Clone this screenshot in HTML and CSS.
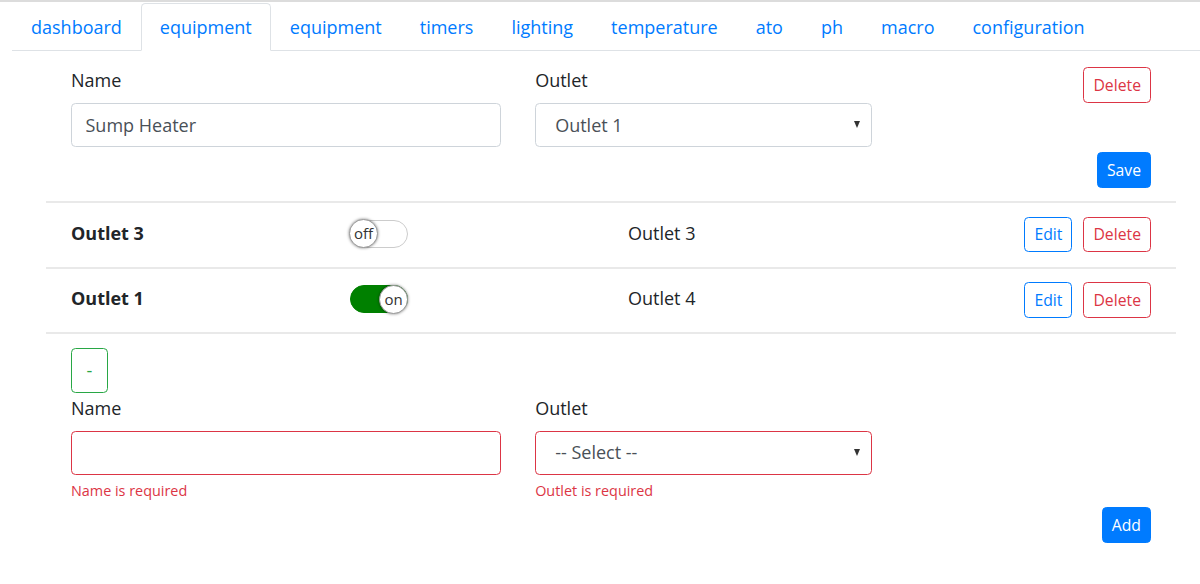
FILE: index.html
```html
<!DOCTYPE html>
<html lang="en">

<head>
  <meta charset="UTF-8" />
  <meta name="viewport" content="width=device-width, initial-scale=1.0" />
  <title>equipment</title>
  <link rel="stylesheet" href="styles.css">
</head>

<body>
  <ul class="tabs">
    <li><a class="tab" href="#">dashboard</a></li>
    <li><a class="tab active" href="#">equipment</a></li>
    <li><a class="tab" href="#">equipment</a></li>
    <li><a class="tab" href="#">timers</a></li>
    <li><a class="tab" href="#">lighting</a></li>
    <li><a class="tab" href="#">temperature</a></li>
    <li><a class="tab" href="#">ato</a></li>
    <li><a class="tab" href="#">ph</a></li>
    <li><a class="tab" href="#">macro</a></li>
    <li><a class="tab" href="#">configuration</a></li>
  </ul>

  <div class="content">
    <form class="edit-form">
      <div class="row">
        <div class="col col-5">
          <label for="name">Name</label>
          <input id="name" class="field" type="text" value="Sump Heater">
        </div>
        <div class="col col-4">
          <label for="outlet">Outlet</label>
          <div class="select">
            <select id="outlet" class="field">
              <option>Outlet 1</option>
            </select>
          </div>
        </div>
        <div class="col col-3 right">
          <button type="button" class="btn btn-sm btn-outline-danger">Delete</button>
        </div>
      </div>
      <div class="actions">
        <button type="submit" class="btn btn-sm btn-primary">Save</button>
      </div>
    </form>

    <ul class="list">
      <li class="row item">
        <div class="col col-3 cell item-name">Outlet 3</div>
        <div class="col col-3 cell">
          <span class="toggle"><span class="knob">off</span></span>
        </div>
        <div class="col col-3 cell">Outlet 3</div>
        <div class="col col-3 right buttons">
          <button type="button" class="btn btn-sm btn-outline-primary">Edit</button>
          <button type="button" class="btn btn-sm btn-outline-danger">Delete</button>
        </div>
      </li>
      <li class="row item">
        <div class="col col-3 cell item-name">Outlet 1</div>
        <div class="col col-3 cell">
          <span class="toggle on"><span class="knob">on</span></span>
        </div>
        <div class="col col-3 cell">Outlet 4</div>
        <div class="col col-3 right buttons">
          <button type="button" class="btn btn-sm btn-outline-primary">Edit</button>
          <button type="button" class="btn btn-sm btn-outline-danger">Delete</button>
        </div>
      </li>
    </ul>

    <form class="add-form">
      <div class="row">
        <div class="col">
          <button type="button" class="btn btn-outline-success">-</button>
        </div>
      </div>
      <div class="row">
        <div class="col col-5">
          <label for="new-name">Name</label>
          <input id="new-name" class="field invalid" type="text">
          <div class="feedback">Name is required</div>
        </div>
        <div class="col col-4">
          <label for="new-outlet">Outlet</label>
          <div class="select">
            <select id="new-outlet" class="field invalid">
              <option>-- Select --</option>
            </select>
          </div>
          <div class="feedback">Outlet is required</div>
        </div>
      </div>
      <div class="actions add">
        <button type="submit" class="btn btn-sm btn-primary">Add</button>
      </div>
    </form>
  </div>
</body>

</html>
```

FILE: styles.css
```css
body {
  margin: 0;
  border-top: 2px solid #dcdcdc;
  font-family: "Open Sans", "Noto Sans", sans-serif;
  font-size: 18px;
  line-height: 1.5;
  color: #212529;
  background: #fff;
}

/* tabs */

.tabs {
  display: flex;
  list-style: none;
  margin: 0 0 0 12px;
  padding: 1px 0 0 0;
  border-bottom: 1px solid #dee2e6;
}

.tab {
  display: block;
  padding: 10px 18px 9px;
  line-height: 27px;
  margin-bottom: -1px;
  border: 1px solid transparent;
  border-radius: 4.5px 4.5px 0 0;
  color: #007bff;
  text-decoration: none;
}

.tab.active {
  border-color: #dee2e6 #dee2e6 #fff;
  background: #fff;
}

/* layout */

.content {
  margin-left: 46px;
  width: 1130px;
}

.row {
  display: flex;
  padding: 0 8px;
}

.col {
  padding: 0 17px;
  box-sizing: border-box;
  flex: 1;
}

.col-5 {
  flex: 0 0 41.6667%;
}

.col-4 {
  flex: 0 0 33.3333%;
}

.col-3 {
  flex: 0 0 25%;
}

.right {
  display: flex;
  justify-content: flex-end;
  align-items: flex-start;
}

label {
  display: block;
  line-height: 27px;
  margin-bottom: 9px;
}

.field {
  display: block;
  width: 100%;
  height: 44px;
  box-sizing: border-box;
  padding: 0 13.5px;
  font: inherit;
  color: #495057;
  border: 1px solid #ced4da;
  border-radius: 4.5px;
  background: #fff;
}

.field.invalid {
  border-color: #dc3545;
}

.select {
  position: relative;
}

.select select {
  appearance: none;
  padding-left: 19px;
}

.select::after {
  content: "";
  position: absolute;
  right: 12px;
  top: 18px;
  border-left: 3.5px solid transparent;
  border-right: 3.5px solid transparent;
  border-top: 7px solid #333;
}

.feedback {
  margin-top: 5px;
  font-size: 14.4px;
  line-height: 21.6px;
  color: #dc3545;
}

/* buttons */

.btn {
  font-family: inherit;
  font-size: 18px;
  line-height: 27px;
  padding: 8px 14.5px;
  border: 1px solid;
  border-radius: 4.5px;
  background: #fff;
  cursor: pointer;
}

.btn-sm {
  font-size: 15.75px;
  line-height: 24.5px;
  padding: 4.5px 9px;
}

.btn-primary {
  background: #007bff;
  border-color: #007bff;
  color: #fff;
}

.btn-outline-primary {
  border-color: #007bff;
  color: #007bff;
}

.btn-outline-danger {
  border-color: #dc3545;
  color: #dc3545;
}

.btn-outline-success {
  border-color: #28a745;
  color: #28a745;
}

/* forms */

.edit-form {
  padding: 16px 0 13px;
}

.actions {
  display: flex;
  justify-content: flex-end;
  padding: 0 25px;
  margin-top: 5px;
}

.actions.add {
  margin-top: 6px;
}

.add-form {
  padding-top: 14px;
}

.add-form .btn-outline-success {
  margin-bottom: 2px;
}

/* list */

.list {
  list-style: none;
  margin: 0;
  padding: 0;
  border-bottom: 2px solid #e9e9e9;
}

.item {
  align-items: center;
  min-height: 64px;
  border-top: 2px solid #e9e9e9;
}

.item + .item {
  min-height: 63px;
}

.cell {
  margin-bottom: 3px;
}

.item-name {
  font-weight: 700;
}

.buttons {
  align-items: center;
  gap: 11px;
}

/* toggle */

.toggle {
  display: inline-flex;
  width: 58px;
  height: 28px;
  box-sizing: border-box;
  border: 1px solid #ccc;
  border-radius: 14px;
  background: #fff;
  vertical-align: middle;
}

.toggle.on {
  justify-content: flex-end;
  background: #008000;
  border-color: #008000;
}

.knob {
  display: flex;
  align-items: center;
  justify-content: center;
  width: 29px;
  height: 29px;
  margin: -1.5px;
  box-sizing: border-box;
  border-radius: 50%;
  border: 1px solid #999;
  background: #fff;
  box-shadow: 0 0 3px rgba(0, 0, 0, 0.5);
  font-size: 15px;
  line-height: 1;
  color: #333;
}
```
